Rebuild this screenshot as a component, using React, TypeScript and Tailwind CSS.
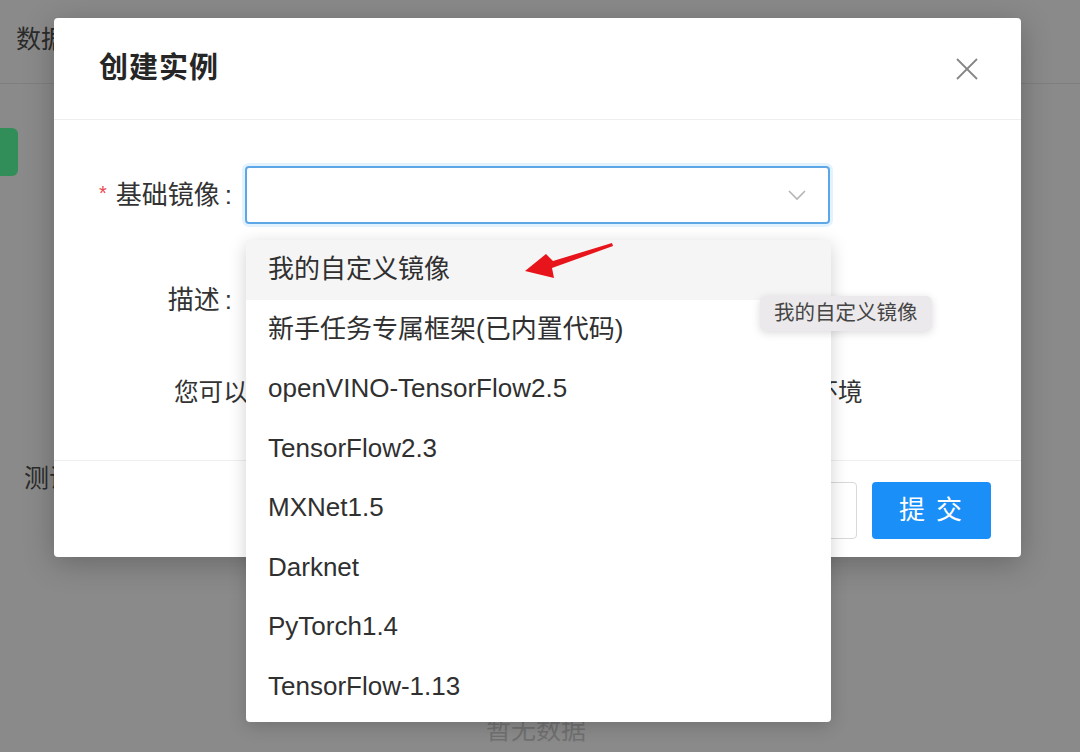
const images = [
  "我的自定义镜像",
  "新手任务专属框架(已内置代码)",
  "openVINO-TensorFlow2.5",
  "TensorFlow2.3",
  "MXNet1.5",
  "Darknet",
  "PyTorch1.4",
  "TensorFlow-1.13",
];

function CloseIcon() {
  return (
    <svg width="24" height="24" viewBox="0 0 24 24" fill="none" stroke="#858585" strokeWidth="1.8">
      <line x1="2" y1="2" x2="22" y2="22" />
      <line x1="22" y1="2" x2="2" y2="22" />
    </svg>
  );
}

function ChevronDown() {
  return (
    <svg width="18" height="12" viewBox="0 0 18 12" fill="none" stroke="#b5b5b5" strokeWidth="1.6">
      <polyline points="1,2 9,10 17,2" />
    </svg>
  );
}

export default function App() {
  return (
    <div className="relative w-[1080px] h-[752px] overflow-hidden bg-[#8a8a8a] font-['Liberation_Sans','Noto_Sans_CJK_SC',sans-serif]">
      {/* page behind the mask */}
      <div className="flex flex-col">
        <div className="h-[84px] border-b border-[#7f7f7f] flex items-center pl-[16px] pb-[4px] text-[25px] text-[#2b2b2b]">
          数据管理
        </div>
        <div className="mt-[44px] w-[18px] h-[48px] rounded-r-md bg-[#328e58]" />
        <div className="mt-[284px] pl-[24px] text-[25px] text-[#2b2b2b] leading-[36px]">测试</div>
        <div className="mt-[216px] self-center text-[25px] text-[#707070] leading-[36px] ml-[-8px]">暂无数据</div>
      </div>

      {/* modal */}
      <div className="absolute left-[54px] top-[18px] w-[967px] h-[539px] bg-white rounded-[4px] shadow-[0_6px_30px_rgba(0,0,0,0.25)] flex flex-col">
        <div className="h-[102px] shrink-0 flex items-center justify-between pl-[45px] pr-[42px] border-b border-[#eeeeee]">
          <span className="text-[29px] font-semibold text-[#262626] tracking-[1px]">创建实例</span>
          <CloseIcon />
        </div>

        <div className="h-[340px] shrink-0 pt-[46px] flex flex-col">
          <div className="flex items-center h-[58px]">
            <div className="w-[178px] flex justify-end items-center text-[26px] text-[#333]">
              <span className="text-[#e8474f] text-[20px] mr-[9px] mt-[-4px]">*</span>
              基础镜像<span className="ml-[5px]">:</span>
            </div>
            <div className="ml-[13px] w-[585px] h-[58px] rounded-[4px] border-2 border-[#5ea7e6] shadow-[0_0_0_3px_rgba(24,144,255,0.12)] flex items-center justify-end pr-[22px]">
              <ChevronDown />
            </div>
          </div>

          <div className="flex items-center h-[60px] mt-[46px]">
            <div className="w-[178px] text-right text-[26px] text-[#333]">
              描述<span className="ml-[5px]">:</span>
            </div>
            <div className="ml-[16px] w-[582px] h-[60px] rounded-[4px] border border-[#d9d9d9]" />
          </div>

          <div className="mt-[45px] pl-[120px] text-[24.6px] leading-[36px] text-[#333] whitespace-nowrap">
            您可以选择预置框架或使用自定义镜像来创建实例所需运行环境
          </div>
        </div>

        <div className="flex-1 border-t border-[#eeeeee] flex justify-end items-start gap-[15px] pt-[21px] pr-[30px]">
          <button className="w-[119px] h-[57px] rounded-[4px] border border-[#d9d9d9] bg-white text-[26px] text-[#333]">
            取 消
          </button>
          <button className="w-[119px] h-[57px] rounded-[4px] bg-[#1a8ff7] text-[26px] text-white tracking-[2px]">
            提 交
          </button>
        </div>
      </div>

      {/* dropdown */}
      <div className="absolute left-[246px] top-[240px] w-[585px] bg-white rounded-[4px] pb-[6px] shadow-[0_4px_18px_rgba(0,0,0,0.18)]">
        {images.map((name, i) => (
          <div
            key={name}
            className={`h-[59.5px] flex items-center pl-[22px] text-[26px] text-[#303030] ${i === 0 ? "bg-[#f5f5f5]" : ""}`}
          >
            {name}
          </div>
        ))}
      </div>

      {/* native title tooltip */}
      <div className="absolute left-[760px] top-[296px] h-[35px] px-[14px] flex items-center rounded-[6px] bg-[#ebe9eb] text-[20.5px] text-[#454545] shadow-[0_2px_8px_rgba(0,0,0,0.15)]">
        我的自定义镜像
      </div>

      {/* annotation arrow */}
      <svg className="absolute left-0 top-0 pointer-events-none" width="1080" height="752">
        <path d="M612,243 L553,261 L546,254 L525,271 L554,278 L552,268 L613,246 Z" fill="#e8141b" />
      </svg>
    </div>
  );
}
